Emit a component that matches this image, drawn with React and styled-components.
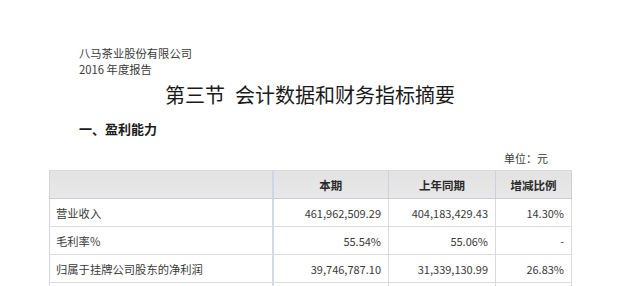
import React from "react";
import styled, { createGlobalStyle } from "styled-components";

const GlobalStyle = createGlobalStyle`
  html, body {
    margin: 0;
    padding: 0;
    background: #ffffff;
    overflow: hidden;
  }
  body {
    font-family: "Noto Sans CJK SC", "Noto Sans", sans-serif;
    color: #333;
  }
`;

const Page = styled.div`
  width: 522px;
  margin-left: 49px;
  display: flex;
  flex-direction: column;
`;

const Company = styled.div`
  margin-top: 45px;
  padding-left: 30px;
  font-size: 11.3px;
  line-height: 16px;
  color: #3a3a3a;
`;

const Title = styled.h1`
  margin: 6px 0 0;
  display: flex;
  justify-content: center;
  gap: 10px;
  font-size: 20px;
  line-height: 24px;
  font-weight: 400;
  color: #1a1a1a;
`;

const Heading = styled.h2`
  margin: 13px 0 0;
  padding-left: 30px;
  font-size: 13px;
  line-height: 18px;
  font-weight: 700;
  color: #1a1a1a;
`;

const Unit = styled.div`
  margin-top: 13px;
  align-self: flex-end;
  margin-right: 23px;
  font-size: 11px;
  line-height: 14px;
  color: #3a3a3a;
`;

const Table = styled.table`
  margin-top: 5px;
  width: 522px;
  border-collapse: collapse;
  table-layout: fixed;
  border-left: 1px solid #d3d6dc;
  border-right: 1px solid #d3d6dc;
`;

const Col = styled.col`
  width: ${(p) => p.$w}px;
`;

const HeadCell = styled.th`
  height: 27px;
  padding: 0;
  background: linear-gradient(#e2e2e2, #e8e8e8);
  border-top: 1px solid #d6d8dc;
  border-bottom: 1px solid #c9ccd4;
  border-right: ${(p) => (p.$first ? "2px solid #cfd6e6" : "1px solid #cdd1dc")};
  font-size: 11.5px;
  font-weight: 700;
  color: #2a2a2a;
  text-align: center;
`;

const Cell = styled.td`
  height: 27px;
  padding: ${(p) => (p.$label ? "0 0 0 6px" : "0 7px 0 0")};
  border-bottom: 1px solid #d9dde2;
  border-right: ${(p) => (p.$first ? "2px solid #d3d9e6" : "1px solid #d6d9e0")};
  text-align: ${(p) => (p.$label ? "left" : "right")};
  font-size: ${(p) => (p.$label ? "11.3px" : "11px")};
  color: #3a3a3a;
  white-space: nowrap;
`;

const rows = [
  ["营业收入", "461,962,509.29", "404,183,429.43", "14.30%"],
  ["毛利率%", "55.54%", "55.06%", "-"],
  ["归属于挂牌公司股东的净利润", "39,746,787.10", "31,339,130.99", "26.83%"],
  ["", "", "", ""],
];

export default function App() {
  return (
    <>
      <GlobalStyle />
      <Page>
        <Company>
          <div>八马茶业股份有限公司</div>
          <div>2016 年度报告</div>
        </Company>
        <Title>
          <span>第三节</span>
          <span>会计数据和财务指标摘要</span>
        </Title>
        <Heading>一、盈利能力</Heading>
        <Unit>单位：元</Unit>
        <Table>
          <colgroup>
            <Col $w={223} />
            <Col $w={116} />
            <Col $w={107} />
            <Col $w={76} />
          </colgroup>
          <thead>
            <tr>
              <HeadCell $first></HeadCell>
              <HeadCell>本期</HeadCell>
              <HeadCell>上年同期</HeadCell>
              <HeadCell>增减比例</HeadCell>
            </tr>
          </thead>
          <tbody>
            {rows.map((r, i) => (
              <tr key={i}>
                <Cell $label $first>{r[0]}</Cell>
                <Cell>{r[1]}</Cell>
                <Cell>{r[2]}</Cell>
                <Cell>{r[3]}</Cell>
              </tr>
            ))}
          </tbody>
        </Table>
      </Page>
    </>
  );
}
